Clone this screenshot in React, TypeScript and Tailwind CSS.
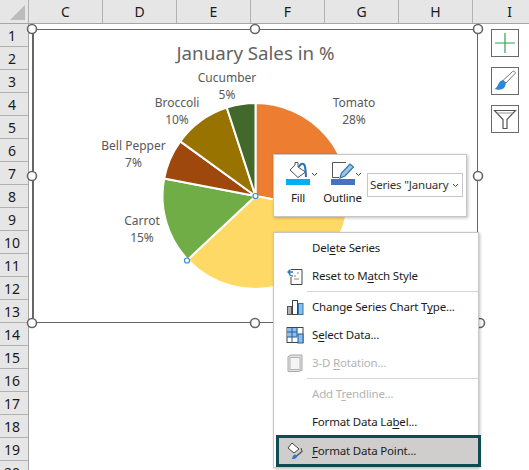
const columns = ['C', 'D', 'E', 'F', 'G', 'H', 'I'];
const rows = Array.from({ length: 20 }, (_, i) => i + 1);

const slices = [
  { pct: 28, color: '#ed7d31' },
  { pct: 35, color: '#ffd966' },
  { pct: 15, color: '#70ad47' },
  { pct: 7, color: '#9e480e' },
  { pct: 10, color: '#997300' },
  { pct: 5, color: '#43682b' },
];

const labels = [
  { name: 'Tomato', pct: '28%', x: 354, y: 107 },
  { name: 'Carrot', pct: '15%', x: 142, y: 225 },
  { name: 'Bell Pepper', pct: '7%', x: 133.5, y: 150 },
  { name: 'Broccoli', pct: '10%', x: 177, y: 107 },
  { name: 'Cucumber', pct: '5%', x: 227, y: 82 },
];

const handles = [
  [32, 29], [255, 29], [478, 29],
  [32, 176], [478, 176],
  [32, 323], [255, 323], [480, 323],
];

const cx = 255.5;
const cy = 196;
const radius = 93;

function slicePath(from: number, to: number) {
  const a = (from / 100) * Math.PI * 2;
  const b = (to / 100) * Math.PI * 2;
  const x1 = cx + radius * Math.sin(a);
  const y1 = cy - radius * Math.cos(a);
  const x2 = cx + radius * Math.sin(b);
  const y2 = cy - radius * Math.cos(b);
  const large = to - from > 50 ? 1 : 0;
  return `M${cx} ${cy}L${x1} ${y1}A${radius} ${radius} 0 ${large} 1 ${x2} ${y2}Z`;
}

function PieChart() {
  let total = 0;
  return (
    <svg viewBox="32 29 446 294" className="absolute left-[-2px] top-[-1px] h-[294px] w-[446px] overflow-visible">
      {slices.map((s) => {
        const d = slicePath(total, total + s.pct);
        total += s.pct;
        return <path key={s.color} d={d} fill={s.color} stroke="#fff" strokeWidth="2" strokeLinejoin="round" />;
      })}
      {labels.map((l) => (
        <text key={l.name} textAnchor="middle" fill="#595959" fontSize="12">
          <tspan x={l.x} y={l.y}>{l.name}</tspan>
          <tspan x={l.x} y={l.y + 17}>{l.pct}</tspan>
        </text>
      ))}
      <circle cx={cx} cy={cy} r="2.5" fill="#fff" stroke="#2f8fdc" strokeWidth="1.2" />
      <circle cx="187" cy="260.5" r="2.5" fill="#fff" stroke="#2f8fdc" strokeWidth="1.2" />
      {handles.map(([x, y]) => (
        <circle key={`${x}-${y}`} cx={x} cy={y} r="4.5" fill="#fff" stroke="#666" strokeWidth="1.6" />
      ))}
    </svg>
  );
}

function SideButton({ children }: { children: React.ReactNode }) {
  return (
    <div className="flex h-[28px] w-[28px] items-center justify-center border border-[#6a6a6a] bg-white">
      {children}
    </div>
  );
}

function Chevron() {
  return (
    <svg viewBox="0 0 7 5" className="h-[5px] w-[7px]">
      <path d="M1 1l2.5 2.5L6 1" fill="none" stroke="#444" strokeWidth="1" />
    </svg>
  );
}

function MiniToolbar() {
  return (
    <div className="absolute left-[273px] top-[154px] flex h-[63px] w-[194px] items-start border border-[#c6c6c6] bg-white pl-[9px] pt-[6px] text-[11.5px] tracking-[-0.18px] shadow-[1px_1px_3px_rgba(0,0,0,0.25)]">
      <div className="relative flex w-[30px] flex-col items-center">
        <svg viewBox="0 0 24 18" className="h-[18px] w-[24px]">
          <path d="M4 9l5-5V1.500h3V6l7.500 5L12 16.500z" fill="#fff" stroke="#555" strokeWidth="1" />
          <path d="M13 6c1-2.500 3-3.500 4.500-3 1.500.8 2 3 2.500 13" fill="none" stroke="#2e75b6" strokeWidth="2" />
        </svg>
        <div className="h-[6px] w-[24px] bg-[#00b0f0]" />
        <span className="mt-[5px] leading-[16px] text-[#222]">Fill</span>
        <div className="absolute left-[28px] top-[11px]"><Chevron /></div>
      </div>
      <div className="relative ml-[6px] flex w-[47px] flex-col items-center">
        <svg viewBox="0 0 24 18" className="h-[18px] w-[24px]">
          <path d="M15 1.500H1.500v15H8" fill="none" stroke="#555" strokeWidth="1" />
          <path d="M9 17l1.500-5L19 3l3.500 3-8.500 9z" fill="#9dc3e6" stroke="#2e75b6" strokeWidth="1.200" />
        </svg>
        <div className="h-[6px] w-[24px] bg-[#4472c4]" />
        <span className="mt-[5px] leading-[16px] text-[#222]">Outline</span>
        <div className="absolute left-[36px] top-[11px]"><Chevron /></div>
      </div>
      <div className="ml-[1px] mt-[12px] flex h-[24px] w-[96px] items-center justify-between border border-[#c6c6c6] pl-[2px] pr-[3px]">
        <span className="whitespace-nowrap text-[#333]">Series "January</span>
        <div className="shrink-0"><Chevron /></div>
      </div>
    </div>
  );
}

function ResetIcon() {
  return (
    <svg viewBox="0 0 18 18" className="h-[18px] w-[18px]">
      <path d="M5 2.500h11v15H5V10" fill="#fff" stroke="#444" strokeWidth="1" />
      <path d="M8 9h2M8 12h5M11 6h2" stroke="#888" strokeWidth="1" />
      <path d="M7 5H3M4.500 2.500L2 5l2.500 2.500M3 5c0 3 2 4 4 4" fill="none" stroke="#2e75b6" strokeWidth="1.300" />
    </svg>
  );
}

function ChartTypeIcon() {
  return (
    <svg viewBox="0 0 18 18" className="h-[18px] w-[18px]">
      <rect x="1.500" y="8.500" width="4" height="8" fill="#b4b4b4" stroke="#555" />
      <rect x="6.500" y="2.500" width="5" height="14" fill="#fff" stroke="#444" />
      <rect x="12.500" y="5.500" width="4.500" height="11" fill="#8dbde8" stroke="#2e75b6" />
    </svg>
  );
}

function SelectDataIcon() {
  return (
    <svg viewBox="0 0 18 18" className="h-[18px] w-[18px]">
      <rect x="1" y="1.500" width="16" height="15" fill="#fff" stroke="#444" />
      <rect x="1.500" y="2" width="10" height="9" fill="#8fbdea" />
      <path d="M1 6h10M1 11h10M6 1.500v15M11 1.500v9" stroke="#1f5f9e" strokeWidth="1" />
      <rect x="12" y="8" width="5" height="9" fill="#8fbdea" stroke="#1f5f9e" />
    </svg>
  );
}

function RotationIcon() {
  return (
    <svg viewBox="0 0 18 18" className="h-[18px] w-[18px]">
      <path d="M2 2.500l3-1.500h11v15l-3 1.500H2z" fill="#e2e2e2" stroke="#a8a8a8" />
      <rect x="4" y="3.500" width="10" height="12" fill="#f4f4f4" stroke="#b4b4b4" />
    </svg>
  );
}

function FormatIcon() {
  return (
    <svg viewBox="0 0 18 18" className="h-[18px] w-[18px]">
      <path d="M6 1l7 6-5 4-6-5z" fill="#fff" stroke="#444" strokeWidth="1" />
      <path d="M15 6l1 3" stroke="#444" strokeWidth="1" />
      <path d="M16.500 9l-7 6" stroke="#555" strokeWidth="1.400" />
      <path d="M9.500 12.500c-2 0-3 2-3.500 4.500 2 .3 4-.2 5-2.500z" fill="#2e75d6" />
    </svg>
  );
}

function MenuItem({ before, mark, after, icon, disabled }: {
  before: string;
  mark: string;
  after: string;
  icon?: React.ReactNode;
  disabled?: boolean;
}) {
  return (
    <div className={`flex h-[28px] items-center pl-[12px] ${disabled ? 'text-[#b3b3b3]' : 'text-[#1c1c1c]'}`}>
      <div className="mr-[8px] flex w-[18px] justify-center">{icon}</div>
      <span>{before}<u className="underline-offset-2">{mark}</u>{after}</span>
    </div>
  );
}

function Separator() {
  return (
    <div className="flex h-[3px] items-center pl-[33px]">
      <div className="h-px w-full bg-[#d4d4d4]" />
    </div>
  );
}

function ContextMenu() {
  return (
    <div className="absolute left-[273px] top-[232px] h-[236px] w-[206px] border border-[#c6c6c6] bg-white pt-px text-[11.5px] tracking-[-0.18px] shadow-[1px_1px_3px_rgba(0,0,0,0.25)]">
      <MenuItem before="Del" mark="e" after="te Series" />
      <MenuItem before="Reset to M" mark="a" after="tch Style" icon={<ResetIcon />} />
      <Separator />
      <MenuItem before="Change Series Chart T" mark="y" after="pe..." icon={<ChartTypeIcon />} />
      <MenuItem before="S" mark="e" after="lect Data..." icon={<SelectDataIcon />} />
      <MenuItem before="3-D " mark="R" after="otation..." icon={<RotationIcon />} disabled />
      <Separator />
      <MenuItem before="Add T" mark="r" after="endline..." disabled />
      <MenuItem before="Format Data La" mark="b" after="el..." />
      <div className="-mt-px ml-[2px] mr-[-3px] flex h-[32px] items-center border-[3px] border-[#0f4c52] bg-[#cfcecd] pl-[7px] text-[#1c1c1c]">
        <div className="mr-[8px] flex w-[18px] justify-center"><FormatIcon /></div>
        <span><u className="underline-offset-2">F</u>ormat Data Point...</span>
      </div>
    </div>
  );
}

export default function App() {
  return (
    <div className="relative h-[470px] w-[529px] overflow-hidden bg-white font-['Noto_Sans',sans-serif]">
      <div className="flex h-[24px] border-b border-[#a6a6a6] bg-[#e6e6e6]">
        <div className="flex w-[29px] shrink-0 items-end justify-end border-r border-[#b1b1b1] pb-[3px] pr-[3px]">
          <div className="h-0 w-0 border-b-[15px] border-l-[15px] border-b-[#bcbcbc] border-l-transparent" />
        </div>
        {columns.map((c) => (
          <div key={c} className="flex w-[74px] shrink-0 items-center justify-center border-r border-[#b1b1b1] text-[14px] text-[#1a1a1a]">
            {c}
          </div>
        ))}
      </div>
      <div className="w-[29px] border-r border-[#a6a6a6] bg-[#e6e6e6]">
        {rows.map((r) => (
          <div key={r} className="flex h-[23px] items-center justify-center border-b border-[#b1b1b1] pr-[4px] text-[14px] text-[#1a1a1a]">
            {r}
          </div>
        ))}
      </div>

      <div className="absolute left-[32px] top-[29px] h-[294px] w-[446px] border border-l-2 border-[#666] bg-white">
        <h1 className="pt-[10px] text-center text-[18.7px] leading-[26px] text-[#636363]">January Sales in %</h1>
        <PieChart />
      </div>

      <div className="absolute left-[491px] top-[29px] flex flex-col gap-[10px]">
        <SideButton>
          <svg viewBox="0 0 22 22" className="h-[22px] w-[22px]">
            <path d="M11 1v20M1 11h20" stroke="#2ea44f" strokeWidth="1.200" />
          </svg>
        </SideButton>
        <SideButton>
          <svg viewBox="0 0 24 24" className="h-[24px] w-[24px]">
            <path d="M21.500 2.500c.8.500 1 1.300.5 2L13 14l-3-2.500 9-8.500c.7-.7 1.800-1 2.500-.5z" fill="#fff" stroke="#777" strokeWidth="1" />
            <path d="M10 11c-3 .5-4 2.500-5 5-.5 1.500-2 3-3.500 4 3.500 1.500 9 1 10.500-2.500.8-2 1-3.500.5-4z" fill="#2e86d6" />
          </svg>
        </SideButton>
        <SideButton>
          <svg viewBox="0 0 24 24" className="h-[24px] w-[24px]">
            <path d="M1.500 3.500h21l-8.500 9v9h-4v-9z" fill="#fff" stroke="#555" strokeWidth="1.200" />
            <path d="M4 6h16" stroke="#999" strokeWidth="1" />
          </svg>
        </SideButton>
      </div>

      <MiniToolbar />
      <ContextMenu />
    </div>
  );
}
